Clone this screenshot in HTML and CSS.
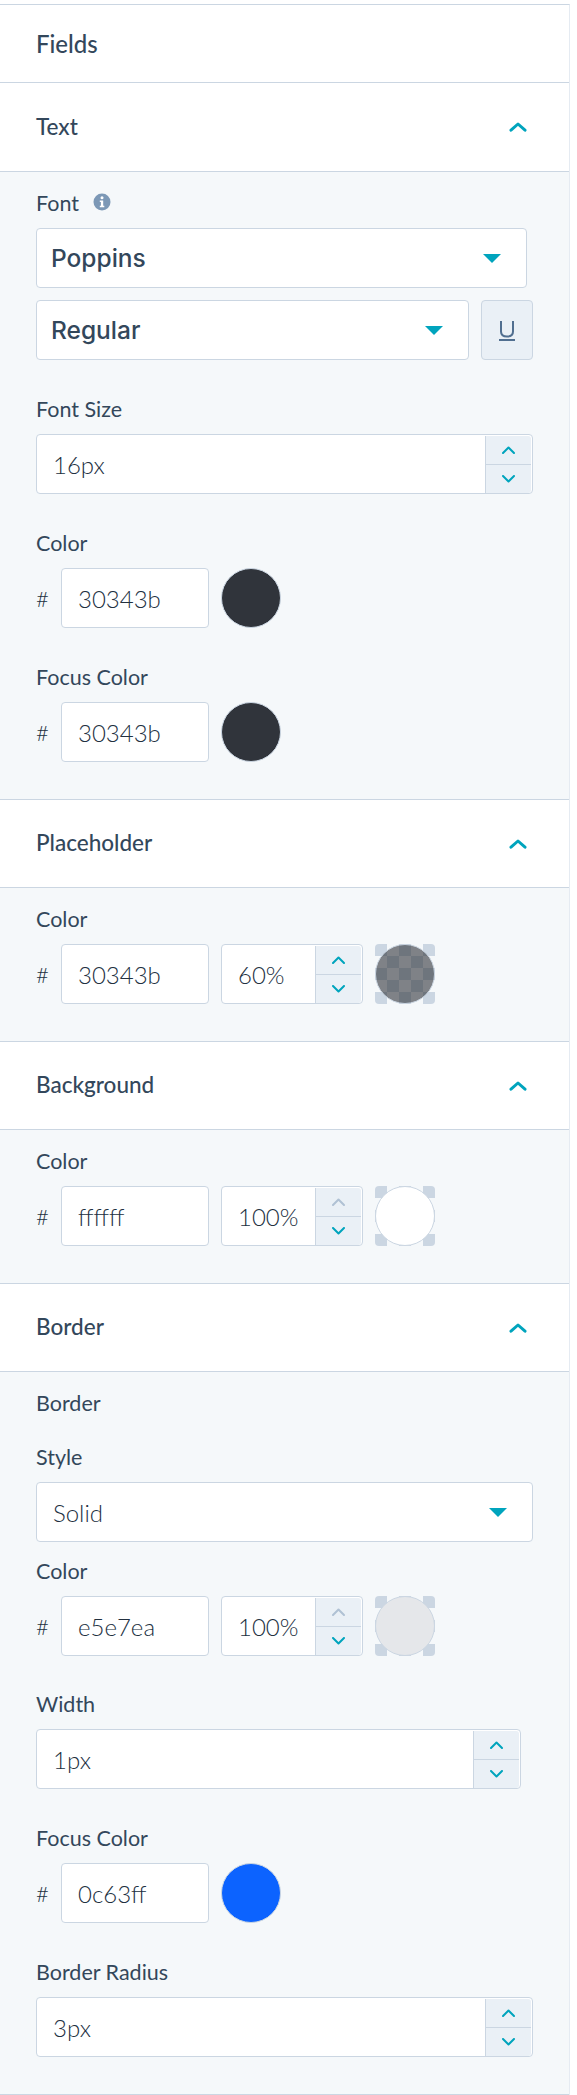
FILE: index.html
```html
<!DOCTYPE html>
<html lang="en">
<head>
    <meta charset="UTF-8">
    <meta name="viewport" content="width=device-width, initial-scale=1.0">
    <title>Fields</title>
    <link rel="stylesheet" href="styles.css">
</head>
<body>
    <svg class="icon-defs" width="0" height="0">
        <symbol id="chevron-up" viewBox="0 0 18 10">
            <path d="M2 8.200 9 2l7 6.200" fill="none" stroke="currentColor" stroke-width="3" stroke-linecap="round" stroke-linejoin="round"/>
        </symbol>
        <symbol id="chevron-small-up" viewBox="0 0 13 8">
            <path d="M1 7 6.500 1.500 12 7" fill="none" stroke="currentColor" stroke-width="2" stroke-linecap="round" stroke-linejoin="round"/>
        </symbol>
        <symbol id="chevron-small-down" viewBox="0 0 13 8">
            <path d="M1 1l5.500 5.500L12 1" fill="none" stroke="currentColor" stroke-width="2" stroke-linecap="round" stroke-linejoin="round"/>
        </symbol>
    </svg>

    <div class="sidebar">
        <div class="title">Fields</div>

        <div class="section-head section-head-first">
            <span>Text</span>
            <svg class="chevron"><use href="#chevron-up"/></svg>
        </div>
        <div class="panel">
            <div class="field">
                <div class="label">Font
                    <svg class="info" viewBox="0 0 18 18">
                        <circle cx="9" cy="9" r="8.500" fill="#7c98b6"/>
                        <circle cx="9" cy="4.800" r="1.500" fill="#fff"/>
                        <path d="M6.800 7.500h3.400v5.200h1.100v1.500H6.800v-1.500h1.100V9H6.800z" fill="#fff"/>
                    </svg>
                </div>
                <div class="select select-font select-first">
                    <span>Poppins</span>
                    <i class="caret"></i>
                </div>
                <div class="font-row">
                    <div class="select select-font">
                        <span>Regular</span>
                        <i class="caret"></i>
                    </div>
                    <div class="underline-btn">
                        <svg viewBox="0 0 16 21" width="16" height="21">
                            <path d="M2 1v10.500c0 3.300 2.500 5 6 5s6-1.700 6-5V1" fill="none" stroke="#516f90" stroke-width="2"/>
                            <path d="M0 20h16" stroke="#516f90" stroke-width="2"/>
                        </svg>
                    </div>
                </div>
            </div>

            <div class="field">
                <div class="label">Font Size</div>
                <div class="input number-input">
                    <span class="value">16px</span>
                    <div class="stepper">
                        <span class="step"><svg><use href="#chevron-small-up"/></svg></span>
                        <span class="step"><svg><use href="#chevron-small-down"/></svg></span>
                    </div>
                </div>
            </div>

            <div class="field">
                <div class="label">Color</div>
                <div class="color-row">
                    <span class="hash">#</span>
                    <div class="input hex-input"><span class="value">30343b</span></div>
                    <div class="swatch-solid swatch-dark"></div>
                </div>
            </div>

            <div class="field">
                <div class="label">Focus Color</div>
                <div class="color-row">
                    <span class="hash">#</span>
                    <div class="input hex-input"><span class="value">30343b</span></div>
                    <div class="swatch-solid swatch-dark"></div>
                </div>
            </div>
        </div>

        <div class="section-head">
            <span>Placeholder</span>
            <svg class="chevron"><use href="#chevron-up"/></svg>
        </div>
        <div class="panel">
            <div class="field">
                <div class="label">Color</div>
                <div class="color-row">
                    <span class="hash">#</span>
                    <div class="input hex-input"><span class="value">30343b</span></div>
                    <div class="input alpha-input">
                        <span class="value">60%</span>
                        <div class="stepper">
                            <span class="step"><svg><use href="#chevron-small-up"/></svg></span>
                            <span class="step"><svg><use href="#chevron-small-down"/></svg></span>
                        </div>
                    </div>
                    <div class="swatch-alpha"><div class="swatch-fill fill-placeholder"></div></div>
                </div>
            </div>
        </div>

        <div class="section-head">
            <span>Background</span>
            <svg class="chevron"><use href="#chevron-up"/></svg>
        </div>
        <div class="panel">
            <div class="field">
                <div class="label">Color</div>
                <div class="color-row">
                    <span class="hash">#</span>
                    <div class="input hex-input"><span class="value">ffffff</span></div>
                    <div class="input alpha-input">
                        <span class="value">100%</span>
                        <div class="stepper">
                            <span class="step step-off"><svg><use href="#chevron-small-up"/></svg></span>
                            <span class="step"><svg><use href="#chevron-small-down"/></svg></span>
                        </div>
                    </div>
                    <div class="swatch-alpha"><div class="swatch-fill fill-white"></div></div>
                </div>
            </div>
        </div>

        <div class="section-head">
            <span>Border</span>
            <svg class="chevron"><use href="#chevron-up"/></svg>
        </div>
        <div class="panel">
            <div class="label label-group">Border</div>

            <div class="field field-tight">
                <div class="label">Style</div>
                <div class="select select-full">
                    <span class="value">Solid</span>
                    <i class="caret"></i>
                </div>
            </div>

            <div class="field field-short">
                <div class="label">Color</div>
                <div class="color-row">
                    <span class="hash">#</span>
                    <div class="input hex-input"><span class="value">e5e7ea</span></div>
                    <div class="input alpha-input">
                        <span class="value">100%</span>
                        <div class="stepper">
                            <span class="step step-off"><svg><use href="#chevron-small-up"/></svg></span>
                            <span class="step"><svg><use href="#chevron-small-down"/></svg></span>
                        </div>
                    </div>
                    <div class="swatch-alpha"><div class="swatch-fill fill-grey"></div></div>
                </div>
            </div>

            <div class="field">
                <div class="label">Width</div>
                <div class="input number-input number-short">
                    <span class="value">1px</span>
                    <div class="stepper">
                        <span class="step"><svg><use href="#chevron-small-up"/></svg></span>
                        <span class="step"><svg><use href="#chevron-small-down"/></svg></span>
                    </div>
                </div>
            </div>

            <div class="field">
                <div class="label">Focus Color</div>
                <div class="color-row">
                    <span class="hash">#</span>
                    <div class="input hex-input"><span class="value">0c63ff</span></div>
                    <div class="swatch-solid swatch-blue"></div>
                </div>
            </div>

            <div class="field">
                <div class="label">Border Radius</div>
                <div class="input number-input">
                    <span class="value">3px</span>
                    <div class="stepper">
                        <span class="step"><svg><use href="#chevron-small-up"/></svg></span>
                        <span class="step"><svg><use href="#chevron-small-down"/></svg></span>
                    </div>
                </div>
            </div>
        </div>
    </div>
</body>
</html>
```

FILE: styles.css
```css
body {
    font-family: Lato, "Open Sans", sans-serif;
    background-color: #fff;
    color: #33475b;
    margin: 0;
    padding: 0;
}

.icon-defs {
    position: absolute;
}

.sidebar {
    box-sizing: border-box;
    width: 570px;
    margin-top: 4px;
    border-top: 1px solid #cbd6e2;
    border-right: 1px solid #e5ebf2;
}

.title {
    height: 77px;
    display: flex;
    align-items: center;
    padding-left: 36px;
    border-bottom: 1px solid #cbd6e2;
    font-size: 24px;
    font-weight: 500;
}

.section-head {
    height: 87px;
    display: flex;
    align-items: center;
    justify-content: space-between;
    padding: 0 42px 0 36px;
    border-bottom: 1px solid #cbd6e2;
    font-size: 22.500px;
    font-weight: 500;
}

.section-head span {
    margin-top: -2px;
}

.section-head-first {
    height: 88px;
}

.chevron {
    width: 18px;
    height: 10px;
    color: #00a4bd;
}

.panel {
    padding: 20px 36px 37px;
    background-color: #f5f8fa;
    border-bottom: 1px solid #cbd6e2;
}

.field {
    margin-bottom: 38px;
}

.field:last-child {
    margin-bottom: 0;
}

.field-tight {
    margin-bottom: 18px;
}

.field-short {
    margin-bottom: 37px;
}

.label {
    box-sizing: border-box;
    height: 24px;
    line-height: 22px;
    padding-bottom: 2px;
    margin-bottom: 12px;
    font-size: 21.500px;
    display: flex;
    align-items: center;
    gap: 14px;
}

.label-group {
    margin-bottom: 30px;
}

.info {
    width: 18px;
    height: 18px;
    margin-top: -3px;
}

.select,
.input {
    box-sizing: border-box;
    height: 60px;
    display: flex;
    align-items: center;
    background-color: #fff;
    border: 1px solid #cbd6e2;
    border-radius: 4px;
}

.select {
    justify-content: space-between;
    padding: 0 25px 0 14px;
}

.select-font {
    font-family: Inter, sans-serif;
    font-size: 24.500px;
    font-weight: 500;
    flex: 1;
}

.select-first {
    margin: 0 6px 12px 0;
}

.select-full {
    padding-left: 16px;
}

.caret {
    width: 0;
    height: 0;
    border-left: 9px solid transparent;
    border-right: 9px solid transparent;
    border-top: 9px solid #00a4bd;
}

.font-row {
    display: flex;
    gap: 12px;
}

.underline-btn {
    box-sizing: border-box;
    width: 52px;
    height: 60px;
    display: flex;
    align-items: center;
    justify-content: center;
    background-color: #eaf0f6;
    border: 1px solid #cbd6e2;
    border-radius: 4px;
}

.value {
    font-size: 24px;
    font-weight: 300;
    color: #22303f;
}

.input .value {
    padding-left: 16px;
    flex: 1;
}

.number-short {
    margin-right: 12px;
}

.stepper {
    width: 45px;
    align-self: stretch;
    display: flex;
    flex-direction: column;
    margin: 1px 1px 0 0;
    background-color: #eaf0f6;
    border-left: 1px solid #cbd6e2;
    border-radius: 0 3px 3px 0;
}

.step {
    flex: 1;
    display: flex;
    align-items: center;
    justify-content: center;
    color: #00a4bd;
}

.step:first-child {
    border-bottom: 1px solid #cbd6e2;
}

.step svg {
    width: 13px;
    height: 8px;
}

.step-off {
    color: #b0c1d4;
}

.color-row {
    display: flex;
    align-items: center;
    gap: 12px;
}

.hash {
    width: 13px;
    font-size: 22px;
    font-weight: 300;
    color: #22303f;
}

.hex-input {
    width: 148px;
}

.alpha-input {
    width: 142px;
}

.swatch-solid {
    box-sizing: border-box;
    width: 60px;
    height: 60px;
    border-radius: 50%;
    border: 1px solid #cbd6e2;
}

.swatch-dark {
    background-color: #30343b;
}

.swatch-blue {
    background-color: #0c63ff;
}

.swatch-alpha {
    width: 60px;
    height: 60px;
    border-radius: 4px;
    background: repeating-conic-gradient(#f5f8fa 0 25%, #cbd6e2 0 50%) 0 0 / 24px 24px;
}

.swatch-fill {
    box-sizing: border-box;
    width: 100%;
    height: 100%;
    border-radius: 50%;
    border: 1px solid #cbd6e2;
}

.fill-placeholder {
    background-color: rgba(48, 52, 59, 0.6);
}

.fill-white {
    background-color: #fff;
}

.fill-grey {
    background-color: #e5e7ea;
}
```
